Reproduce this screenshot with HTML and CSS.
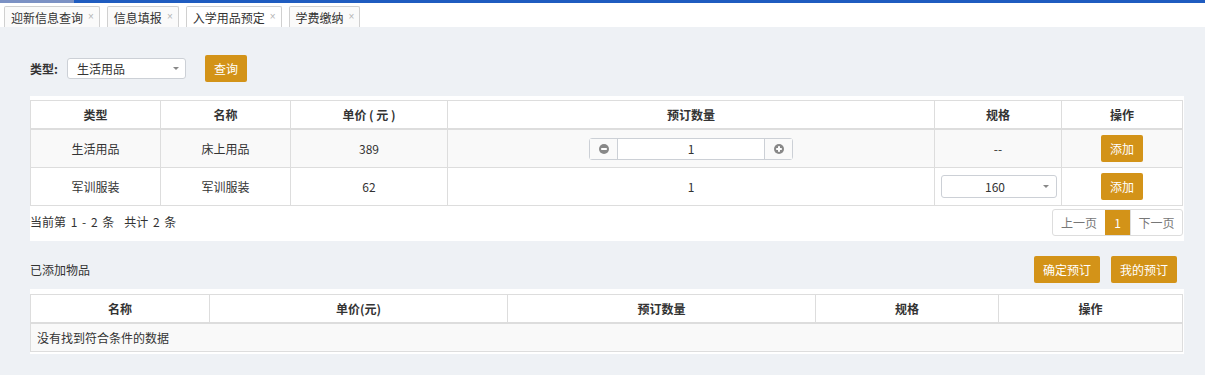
FILE: index.html
```html
<!DOCTYPE html>
<html lang="zh-CN">
<head>
<meta charset="utf-8">
<title>入学用品预定</title>
<link rel="stylesheet" href="styles.css">
</head>
<body>
<div class="topbar"><div class="seg1"></div><div class="seg2"></div></div>
<div class="tabbar">
  <div class="tab">迎新信息查询<span class="x">×</span></div>
  <div class="tab">信息填报<span class="x">×</span></div>
  <div class="tab active">入学用品预定<span class="x">×</span></div>
  <div class="tab">学费缴纳<span class="x">×</span></div>
</div>
<div class="main">
  <div class="filter">
    <span class="flabel">类型:</span>
    <div class="fselect">生活用品<span class="caret"></span></div>
    <button class="btn qbtn">查询</button>
  </div>

  <div class="panel p1">
    <table class="grid">
      <colgroup><col style="width:130px"><col style="width:130px"><col style="width:157px"><col style="width:487px"><col style="width:127px"><col style="width:121px"></colgroup>
      <thead><tr><th>类型</th><th>名称</th><th>单价 ( 元 )</th><th>预订数量</th><th>规格</th><th>操作</th></tr></thead>
      <tbody>
        <tr class="odd">
          <td>生活用品</td><td>床上用品</td><td>389</td>
          <td><div class="stepper">
            <span class="sbtn"><svg width="10" height="10" viewBox="0 0 10 10"><circle cx="5" cy="5" r="5" fill="#888"/><rect x="2.2" y="4" width="5.6" height="2" fill="#fff"/></svg></span>
            <span class="sval">1</span>
            <span class="sbtn"><svg width="10" height="10" viewBox="0 0 10 10"><circle cx="5" cy="5" r="5" fill="#888"/><rect x="2.2" y="4" width="5.6" height="2" fill="#fff"/><rect x="4" y="2.2" width="2" height="5.6" fill="#fff"/></svg></span>
          </div></td>
          <td>--</td>
          <td><button class="btn addbtn">添加</button></td>
        </tr>
        <tr>
          <td>军训服装</td><td>军训服装</td><td>62</td><td>1</td>
          <td><div class="sizesel">160<span class="caret"></span></div></td>
          <td><button class="btn addbtn">添加</button></td>
        </tr>
      </tbody>
    </table>
    <div class="tfoot">
      <span class="info">当前第 1 - 2 条<span class="gap"></span>共计 2 条</span>
      <div class="pager">
        <span class="pg">上一页</span><span class="pg cur">1</span><span class="pg">下一页</span>
      </div>
    </div>
  </div>

  <div class="sechead">
    <span class="stitle">已添加物品</span>
    <div class="sbtns"><button class="btn bigbtn">确定预订</button><button class="btn bigbtn">我的预订</button></div>
  </div>

  <div class="panel p2">
    <table class="grid g2">
      <colgroup><col style="width:179px"><col style="width:298px"><col style="width:308px"><col style="width:183px"><col style="width:184px"></colgroup>
      <thead><tr><th>名称</th><th>单价(元)</th><th>预订数量</th><th>规格</th><th>操作</th></tr></thead>
      <tbody><tr class="odd"><td colspan="5" class="empty">没有找到符合条件的数据</td></tr></tbody>
    </table>
  </div>
</div>
</body>
</html>
```

FILE: styles.css
```css
* { box-sizing: border-box; }
html, body { margin: 0; padding: 0; }
body {
  background: #eef1f5;
  font-family: "Noto Sans CJK SC", "Noto Sans", sans-serif;
  font-size: 12px;
  color: #333;
  height: 375px;
  overflow: hidden;
}
.topbar { display: flex; height: 3px; }
.seg1 { width: 74px; background: #7b91c4; }
.seg2 { flex: 1; background: #1f5cc0; }
.tabbar {
  background: #fff;
  height: 24px;
  padding: 3px 0 0 4px;
  display: flex;
  gap: 7px;
  align-items: flex-end;
}
.tab {
  height: 21px;
  line-height: 19px;
  border: 1px solid #d0d0d0;
  border-bottom: none;
  border-radius: 2px 2px 0 0;
  padding: 0 5px 0 6px;
  background: #fafafa;
  white-space: nowrap;
  color: #333;
  display: flex;
  align-items: center;
}
.tab.active { background: #fff; }
.tab .x {
  font-family: "Liberation Sans", Arial, sans-serif;
  color: #b5b5b5;
  font-size: 10px;
  margin-left: 5px;
  line-height: 12px;
}
.main { padding: 0 21px 0 30px; }
.filter {
  margin-top: 28px;
  height: 27px;
  display: flex;
  align-items: center;
}
.flabel { font-weight: bold; width: 37px; }
.fselect {
  width: 119px;
  height: 21px;
  line-height: 19px;
  border: 1px solid #ccd0d6;
  border-radius: 3px;
  background: #fff;
  padding-left: 9px;
  position: relative;
}
.caret {
  position: absolute;
  right: 6px;
  top: 8px;
  width: 0; height: 0;
  border-left: 3px solid transparent;
  border-right: 3px solid transparent;
  border-top: 3px solid #888;
}
.btn {
  font-family: inherit;
  font-size: 12px;
  color: #fff;
  background: #d39318;
  border: none;
  border-radius: 2px;
  height: 27px;
  padding: 0;
  cursor: pointer;
}
.qbtn { width: 42px; margin-left: 19px; }
.panel { background: #fff; }
.p1 { margin-top: 14px; padding: 4px 2px 5px 0; }
.grid {
  table-layout: fixed;
  width: 1152px;
  border-collapse: separate;
  border-spacing: 0;
  border-top: 1px solid #ddd;
  border-left: 1px solid #ddd;
}
.grid th, .grid td {
  border-right: 1px solid #ddd;
  border-bottom: 1px solid #ddd;
  padding: 0;
  text-align: center;
  vertical-align: middle;
}
.grid th {
  border-bottom-width: 2px;
  line-height: 27px;
  font-weight: bold;
  background: #fff;
}
.grid td { height: 38px; }
.grid tr.odd td { background: #f9f9f9; }
.stepper {
  display: inline-flex;
  vertical-align: middle;
  width: 204px;
  height: 22px;
  border: 1px solid #ccd0d6;
  border-radius: 3px;
  background: #fff;
}
.sbtn {
  width: 28px;
  display: flex;
  align-items: center;
  justify-content: center;
  background: #fafafa;
}
.sbtn:first-child { border-right: 1px solid #ccd0d6; }
.sbtn:last-child { border-left: 1px solid #ccd0d6; }
.sval { flex: 1; line-height: 20px; text-align: center; color: #333; }
.sizesel {
  position: relative;
  margin: 0 4px 0 6px;
  height: 23px;
  line-height: 21px;
  border: 1px solid #ccd0d6;
  border-radius: 3px;
  background: #fff;
  text-align: center;
  padding-right: 8px;
}
.sizesel .caret { top: 9px; right: 7px; }
.addbtn { width: 42px; vertical-align: middle; }
.tfoot {
  display: flex;
  justify-content: space-between;
  align-items: flex-start;
  margin-top: 3px;
}
.info { padding-top: 5px; line-height: 16px; word-spacing: 2px; }
.info .gap { display: inline-block; width: 10px; }
.pager {
  display: flex;
  height: 27px;
  border: 1px solid #ddd;
  border-radius: 3px;
  overflow: hidden;
  margin-right: -1px;
}
.pg { line-height: 25px; text-align: center; color: #777; width: 52px; }
.pg.cur { width: 25px; background: #d39318; color: #fff; }
.pg:last-child { border-left: 1px solid #ddd; }
.sechead {
  margin-top: 15px;
  height: 27px;
  display: flex;
  align-items: center;
  justify-content: space-between;
}
.sbtns { display: flex; gap: 11px; margin-right: 7px; }
.bigbtn { width: 66px; }
.p2 { margin-top: 6px; padding: 5px 2px 2px 0; }
.g2 td { height: 28px; }
.g2 td.empty { text-align: left; padding-left: 6px; }
```
